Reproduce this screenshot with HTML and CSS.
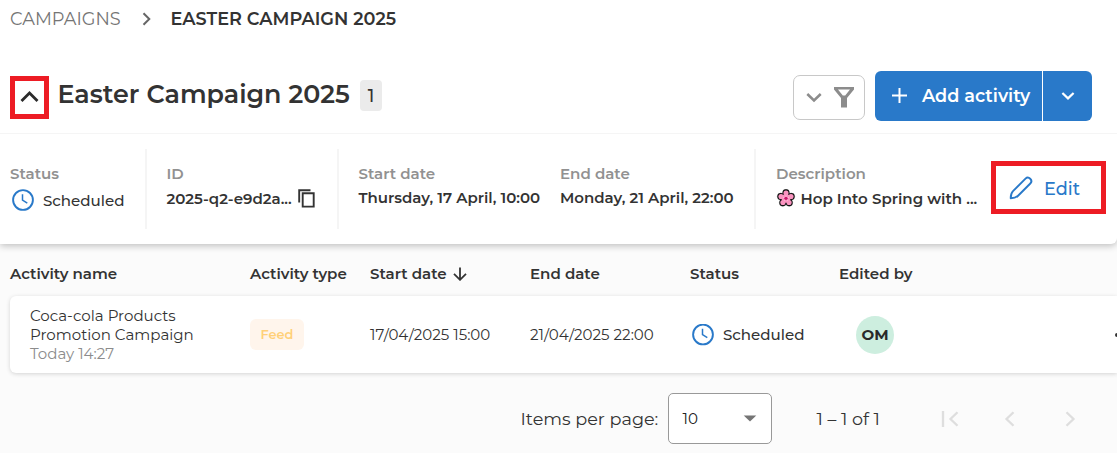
FILE: index.html
```html
<!DOCTYPE html>
<html lang="en">
<head>
<meta charset="utf-8">
<title>Easter Campaign 2025</title>
<link rel="stylesheet" href="styles.css">
</head>
<body>
<section class="panel">
  <nav class="crumbs">
    <span class="crumb">CAMPAIGNS</span>
    <svg class="crumb-sep" width="12" height="16" viewBox="0 0 12 16"><path d="M2.500 2.200 8.300 8 2.500 13.800"/></svg>
    <span class="crumb-current">EASTER CAMPAIGN 2025</span>
  </nav>
  <header class="heading">
    <button class="toggle"><svg width="20" height="14" viewBox="0 0 20 14"><path d="M1.500 11 9.500 3l8 8"/></svg></button>
    <h1 class="title">Easter Campaign 2025</h1>
    <span class="count">1</span>
    <div class="actions">
      <button class="filter">
        <svg class="filter-chevron" width="16" height="12" viewBox="0 0 16 12"><path d="m1.300 2 6.700 6.500L14.700 2"/></svg>
        <svg class="funnel" width="22" height="22" viewBox="0 0 22 22"><path fill-rule="evenodd" d="M1 0h20v2.400L14 11v9.500H8V11L1 2.400zM5 2.600 9.800 8.600h2.400L17 2.600z"/></svg>
      </button>
      <div class="split">
        <button class="add"><svg width="16" height="16" viewBox="0 0 16 16"><path d="M7.500 0v15M0 7.500h15"/></svg><span>Add activity</span></button>
        <button class="more"><svg width="14" height="10" viewBox="0 0 14 10"><path d="m1.400 2 5.600 5.400L12.600 2"/></svg></button>
      </div>
    </div>
  </header>
  <div class="details">
    <div class="cell">
      <div class="field"><span class="label">Status</span>
        <span class="status"><svg class="clock" width="22" height="22" viewBox="0 0 22 22"><circle cx="11" cy="11" r="9.900"/><path d="M10.500 5.300v5.900l4.800 2.900"/></svg><span>Scheduled</span></span></div>
    </div>
    <div class="cell">
      <div class="field"><span class="label">ID</span>
        <span class="value id"><span>2025-q2-e9d2a...</span><svg class="copy" width="18" height="19" viewBox="0 0 18 19"><path d="M1.200 13.500V1.200h11.300"/><path d="M4.700 4.200h11v13.400h-11z"/></svg></span></div>
    </div>
    <div class="cell dates">
      <div class="field start"><span class="label">Start date</span><span class="value date">Thursday, 17 April, 10:00</span></div>
      <div class="field"><span class="label">End date</span><span class="value date">Monday, 21 April, 22:00</span></div>
    </div>
    <div class="cell last">
      <div class="field"><span class="label">Description</span>
        <span class="value desc">
          <svg class="flower" width="20" height="20" viewBox="0 0 18 18">
            <g class="petals"><circle cx="9" cy="4.300" r="3.100"/><circle cx="13.700" cy="7.700" r="3.100"/><circle cx="11.900" cy="13.300" r="3.100"/><circle cx="6.100" cy="13.300" r="3.100"/><circle cx="4.300" cy="7.700" r="3.100"/></g>
            <g class="petal-fill"><circle cx="9" cy="4.500" r="2.300"/><circle cx="13.500" cy="7.700" r="2.300"/><circle cx="11.800" cy="13.100" r="2.300"/><circle cx="6.200" cy="13.100" r="2.300"/><circle cx="4.500" cy="7.700" r="2.300"/><circle cx="9" cy="9.300" r="4"/></g>
            <path class="stamen" d="M9 9.300V6.600M9 9.300l2.600-.8M9 9.300l1.600 2.200M9 9.300l-1.600 2.200M9 9.300 6.400 8.500"/><circle class="heart" cx="9" cy="9.300" r="1.500"/>
          </svg><span>Hop Into Spring with ...</span></span></div>
      <button class="edit"><svg width="24" height="24" viewBox="0 0 24 24"><path d="M1.700 22.300c0-3.300.5-5.300 2.300-7.100L16.500 2.700c3.100-3.100 7.900 1.700 4.800 4.800L8.800 20c-1.800 1.800-3.800 2.300-7.100 2.300z"/></svg><span>Edit</span></button>
    </div>
  </div>
</section>
<main class="list">
  <div class="row head">
    <span>Activity name</span><span>Activity type</span>
    <span class="sorted">Start date<svg width="14" height="14" viewBox="0 0 14 14"><path d="M7 .5v12M1 6.800l6 6 6-6"/></svg></span>
    <span>End date</span><span>Status</span><span>Edited by</span>
  </div>
  <div class="row item">
    <div class="name"><span>Coca-cola Products</span><span>Promotion Campaign</span><span class="time">Today 14:27</span></div>
    <div><span class="tag">Feed</span></div>
    <span>17/04/2025 15:00</span>
    <span>21/04/2025 22:00</span>
    <span class="status"><svg class="clock" width="22" height="22" viewBox="0 0 22 22"><circle cx="11" cy="10.500" r="9.900"/><path d="M10.500 4.800v5.900l4.800 2.900"/></svg><span>Scheduled</span></span>
    <div class="avatar">OM</div>
    <div class="menu"><i class="dot"></i></div>
  </div>
  <footer class="pager">
    <span class="per-page">Items per page:</span>
    <div class="select"><span>10</span><svg width="14" height="7" viewBox="0 0 14 7"><path d="M.7.500h12.600L7 6.500z"/></svg></div>
    <span class="range">1 – 1 of 1</span>
    <svg class="nav first" width="18" height="16" viewBox="0 0 18 16"><path d="M2 0v16M16.500 1.200 9.500 8l7 6.800"/></svg>
    <svg class="nav prev" width="12" height="16" viewBox="0 0 12 16"><path d="M9.500 1.200 2.500 8l7 6.800"/></svg>
    <svg class="nav next" width="12" height="16" viewBox="0 0 12 16"><path d="m2.500 1.200 7 6.800-7 6.800"/></svg>
  </footer>
</main>
</body>
</html>
```
FILE: styles.css
```css
* { box-sizing: border-box; }
body { margin: 0; height: 453px; overflow: hidden; background: #fbfbfb; color: #333; font-family: Montserrat, Inter, sans-serif; font-size: 15.050px; white-space: nowrap; }
button { margin: 0; padding: 0; border: 0; background: none; font: inherit; color: inherit; }
svg { display: block; flex: none; fill: none; stroke: currentColor; }
.panel { position: relative; height: 244px; background: #fff; border-radius: 0 0 6px 0; box-shadow: 0 2px 7px rgba(0, 0, 0, .24); }

.crumbs { display: flex; align-items: center; height: 37px; margin-bottom: 1px; padding-left: 10px; font-size: 17.700px; }
.crumb { width: 131px; color: #757575; }
.crumb-sep { width: 12px; margin-right: 17.500px; color: #666; stroke-width: 2; }
.crumb-current { font-weight: 600; }

.heading { display: flex; align-items: flex-start; height: 96px; padding: 33px 25px 0 10px; border-bottom: 1px solid #f5f5f5; }
.toggle { display: flex; align-items: center; justify-content: center; width: 39px; height: 43px; margin-top: 5px; border: 5px solid #ed1c24; }
.toggle svg { margin-top: -2px; stroke: #2b2b2b; stroke-width: 2.8; }
.title { width: 302.500px; margin: 6px 0 0 8.500px; font-size: 25.350px; font-weight: 600; line-height: 33px; }
.count { width: 22px; margin-top: 9px; border-radius: 4px; background: #ebebeb; font-size: 17.700px; font-weight: 500; line-height: 31px; text-align: center; }
.actions { display: flex; margin-left: auto; gap: 10px; }
.filter { display: flex; align-items: center; gap: 11px; width: 72px; height: 45px; margin-top: 4px; padding-left: 12px; border: 1px solid #c8c8c8; border-radius: 7px; color: #8c8c8c; }
.filter-chevron { stroke-width: 2.500; }
.funnel { fill: #8c8c8c; stroke: none; }
.split { display: flex; height: 50px; border-radius: 6px; background: #2979c9; color: #fff; overflow: hidden; }
.add { display: flex; align-items: center; gap: 14px; width: 168px; padding: 0 0 1px 17px; border-right: 1px solid #fff; font-size: 17.650px; font-weight: 600; }
.add svg { stroke-width: 2; }
.more { display: flex; align-items: center; justify-content: center; width: 49px; }
.more svg { stroke-width: 2.200; }

.details { display: grid; grid-template-columns: 147px 192px 417px 1fr; height: 110px; padding: 15px 0; }
.cell { display: flex; padding: 14px 0 0 19.500px; border-right: 2px solid #f5f5f5; }
.cell:first-child { padding-left: 10px; }
.cell.last { padding-left: 20px; border: 0; }
.field { display: flex; flex-direction: column; }
.start { width: 201.500px; }
.label { height: 22px; font-weight: 600; line-height: 22px; color: #919191; }
.value { display: flex; align-items: center; height: 26px; font-weight: 600; }
.date { height: 24px; font-size: 15px; }
.id { gap: 6px; }
.copy { stroke-width: 1.900; }
.desc { width: 215px; gap: 4.500px; }
.petals { fill: #111; stroke: #111; stroke-width: .3; }
.petal-fill { fill: #fa94c0; stroke: none; }
.stamen { stroke: #ffc1dc; stroke-width: .9; }
.heart { fill: #c91568; stroke: none; }
.status { display: flex; align-items: center; gap: 9px; height: 30px; padding-left: 2px; font-weight: 500; }
.clock { stroke: #2979c9; stroke-width: 1.900; }
.clock path { stroke-width: 1.500; }
.edit { display: flex; align-items: center; gap: 11px; width: 115px; height: 53px; margin-top: -2px; padding: 1px 0 0 13px; border: 5px solid #ed1c24; color: #2979c9; font-size: 17.700px; font-weight: 500; }
.edit svg { stroke-width: 1.900; stroke-linejoin: round; }

.list { padding-left: 10px; }
.row { display: grid; grid-template-columns: 240px 120px 160px 160px 149px 1fr auto; align-items: center; }
.head { height: 52px; padding-top: 7px; font-weight: 600; }
.sorted { display: flex; align-items: center; gap: 6px; }
.sorted svg { stroke-width: 1.800; }
.item { height: 77px; border-radius: 6px 0 0 6px; background: #fff; box-shadow: 0 1px 4px rgba(0, 0, 0, .16); }
.name { display: flex; flex-direction: column; padding-left: 20px; line-height: 19px; }
.time { color: #8c8c8c; }
.tag { display: block; width: 54px; border-radius: 6px; background: #fff5ec; color: #ffd078; font-size: 12.900px; font-weight: 600; line-height: 31px; text-align: center; }
.avatar { width: 38px; margin-left: 17px; border-radius: 50%; background: #cdeedf; color: #292929; font-weight: 700; line-height: 38px; text-align: center; }
.menu { width: 2px; overflow: hidden; }
.dot { display: block; width: 4px; height: 4px; border-radius: 50%; background: #333; }

.pager { display: flex; align-items: center; margin-top: 20px; height: 51px; padding-left: 510.500px; font-size: 17.650px; }
.per-page { width: 147px; }
.select { display: flex; align-items: center; justify-content: space-between; width: 104px; height: 51px; padding: 0 14px; border: 1px solid #999; border-radius: 5px; background: #fff; color: #222; font-size: 15.100px; }
.select svg { fill: #757575; stroke: none; }
.range { width: 124px; margin-left: 45px; }
.nav { color: #dedede; stroke-width: 2.300; }
.prev { margin-left: 45px; }
.next { margin-left: 48px; }
```
